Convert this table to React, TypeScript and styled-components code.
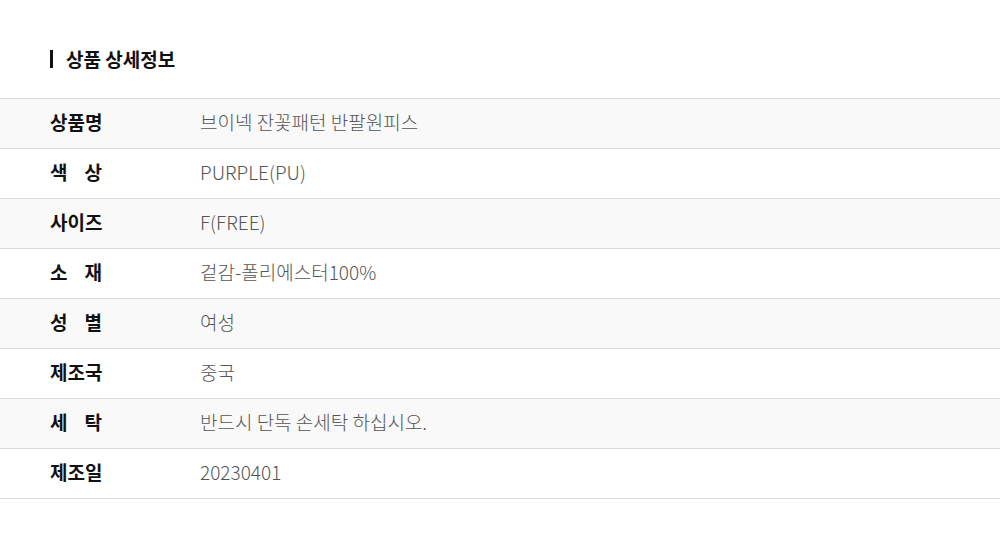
import React from "react";
import styled, { createGlobalStyle } from "styled-components";

const GlobalStyle = createGlobalStyle`
  html, body {
    margin: 0;
    padding: 0;
    background: #fff;
  }
  body {
    font-family: "Noto Sans CJK KR", "Noto Sans", sans-serif;
  }
`;

const rows: { label: string; value: string }[] = [
  { label: "상품명", value: "브이넥 잔꽃패턴 반팔원피스" },
  { label: "색 상", value: "PURPLE(PU)" },
  { label: "사이즈", value: "F(FREE)" },
  { label: "소 재", value: "겉감-폴리에스터100%" },
  { label: "성 별", value: "여성" },
  { label: "제조국", value: "중국" },
  { label: "세 탁", value: "반드시 단독 손세탁 하십시오." },
  { label: "제조일", value: "20230401" },
];

const Page = styled.div`
  width: 1000px;
  padding-top: 47px;
`;

const Title = styled.h2`
  display: flex;
  align-items: center;
  gap: 13px;
  margin: 0 0 27px 50px;
  font-size: 19px;
  font-weight: 700;
  line-height: 24px;
  color: #111;

  &::before {
    content: "";
    display: block;
    width: 3px;
    height: 18px;
    background: #111;
  }
`;

const Table = styled.div`
  border-top: 1px solid #dcdcdc;
`;

const Row = styled.div<{ $shade: boolean }>`
  display: flex;
  align-items: center;
  box-sizing: border-box;
  height: 50px;
  padding-bottom: 5px;
  border-bottom: 1px solid #dcdcdc;
  background: ${({ $shade }) => ($shade ? "#f9f9f9" : "#fff")};
`;

const Label = styled.div`
  width: 52px;
  margin-left: 50px;
  margin-right: 98px;
  font-size: 19px;
  font-weight: 700;
  color: #111;
  text-align: justify;
  text-align-last: justify;
  white-space: nowrap;
`;

const Value = styled.div`
  font-size: 19px;
  font-weight: 300;
  color: #555;
`;

export default function App() {
  return (
    <Page>
      <GlobalStyle />
      <Title>상품 상세정보</Title>
      <Table>
        {rows.map((r, i) => (
          <Row key={r.label} $shade={i % 2 === 0}>
            <Label>{r.label}</Label>
            <Value>{r.value}</Value>
          </Row>
        ))}
      </Table>
    </Page>
  );
}
